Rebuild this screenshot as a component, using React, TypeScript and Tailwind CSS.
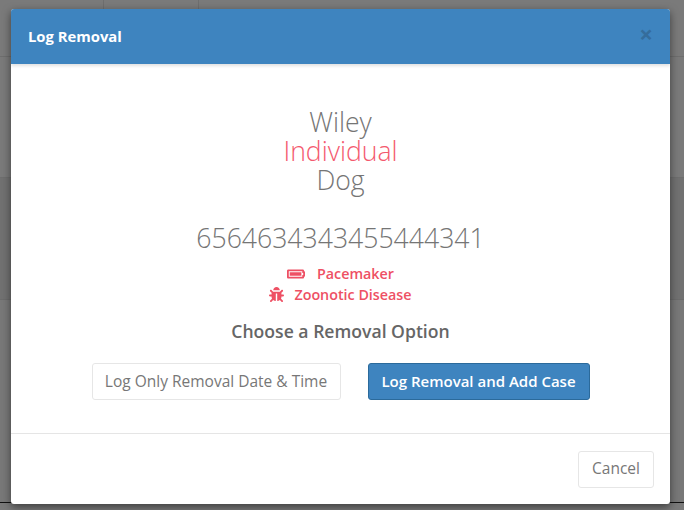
import { FaBatteryFull, FaBug } from "react-icons/fa";

const font = { fontFamily: '"Open Sans", sans-serif' };

export default function App() {
  return (
    <div style={font} className="relative h-[510px] w-[684px] overflow-hidden bg-[#7a7a7a]">
      {/* Page behind the backdrop */}
      <div className="flex h-[57px] border-b border-[#6e6e6e]">
        <div className="w-[104px] border-r border-[#6e6e6e]" />
        <div className="w-[95px] border-r border-[#6e6e6e]" />
      </div>
      <div className="h-[121px] border-b border-[#6e6e6e] bg-[#7a7a7a]" />
      <div className="h-[122px] border-b border-[#6c6c6c] bg-[#717171]" />
      <div className="h-[203px] border-b border-[#111111] bg-[#787878]" />

      {/* Modal */}
      <div className="absolute left-[11px] top-[9px] h-[495px] w-[659px] flex flex-col rounded-[3px] bg-white shadow-[0_3px_9px_rgba(0,0,0,0.5)] overflow-hidden">
        {/* Header */}
        <div className="h-[55px] shrink-0 flex items-center justify-between px-[17px] bg-[#3e84bf] shadow-[0_2px_3px_rgba(0,0,0,0.12)]">
          <h4 className="text-[14.8px] font-bold text-white">Log Removal</h4>
          <span className="mb-[5px] text-[24px] leading-none font-bold text-[#356d9c]">×</span>
        </div>

        {/* Body */}
        <div className="flex-1 flex flex-col items-center pt-[44px] text-[#757575]">
          <div className="text-[26.6px] leading-[29px] font-light text-center">
            <div>Wiley</div>
            <div className="text-[#f4596e]">Individual</div>
            <div>Dog</div>
          </div>
          <div className="mt-[28px] text-[26.6px] leading-[30px] font-light">6564634343455444341</div>
          <div className="mt-[10px] flex flex-col items-center text-[14.3px] font-semibold text-[#ee5064]">
            <div className="h-[21px] flex items-center gap-[12px]">
              <FaBatteryFull className="w-[18px] h-[18px]" />
              <span>Pacemaker</span>
            </div>
            <div className="h-[21px] flex items-center gap-[10px]">
              <FaBug className="w-[15px] h-[15px]" />
              <span>Zoonotic Disease</span>
            </div>
          </div>
          <div className="mt-[15px] text-[17.6px] leading-[22px] font-semibold text-[#666666]">Choose a Removal Option</div>
          <div className="mt-[21px] flex gap-[27px]">
            <button className="h-[37px] w-[249px] rounded-[3px] border border-[#e6e6e6] bg-white text-[15.5px] text-[#777777]">
              Log Only Removal Date &amp; Time
            </button>
            <button className="h-[37px] w-[222px] rounded-[3px] border border-[#2b6a9b] bg-[#3e84bf] text-[15px] font-semibold text-white">
              Log Removal and Add Case
            </button>
          </div>
        </div>

        {/* Footer */}
        <div className="h-[71px] shrink-0 flex items-center justify-end border-t border-[#e5e5e5] pr-[16px]">
          <button className="h-[37px] w-[76px] rounded-[3px] border border-[#e6e6e6] bg-white text-[15.5px] text-[#777777]">
            Cancel
          </button>
        </div>
      </div>
    </div>
  );
}
